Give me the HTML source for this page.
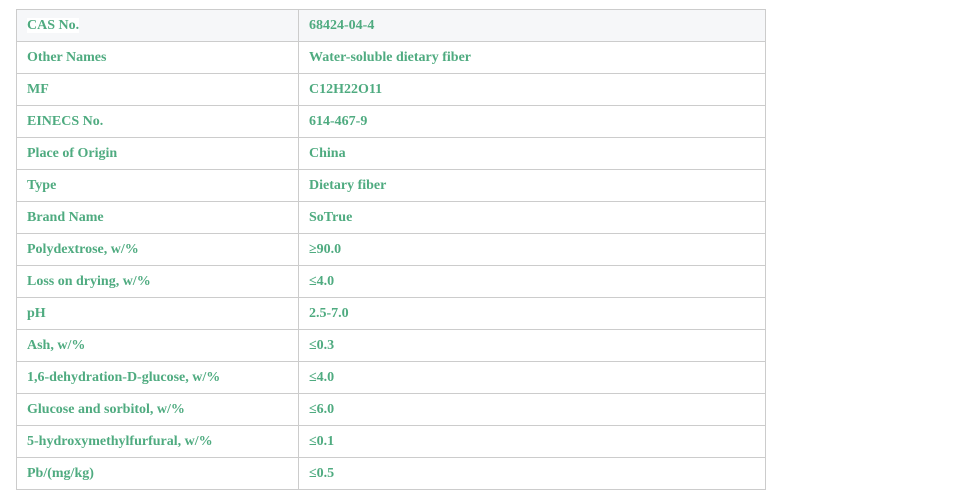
<!DOCTYPE html>
<html><head><style>
body{margin:0;background:#fff;}
table{position:absolute;left:16px;top:9px;border-collapse:collapse;width:750px;font-family:"Liberation Serif",serif;font-weight:bold;font-size:14px;color:#4fab80;}
td{border:1px solid #cccccc;height:32px;padding:0 0 0 10px;box-sizing:border-box;}
td:first-child{width:282px;}
tr:first-child td{background:#f6f7f9;}
tr:first-child td span{background:#fff;}
</style></head><body>
<table>
<tr><td><span>CAS No.</span></td><td>68424-04-4</td></tr>
<tr><td>Other Names</td><td>Water-soluble dietary fiber</td></tr>
<tr><td>MF</td><td>C12H22O11</td></tr>
<tr><td>EINECS No.</td><td>614-467-9</td></tr>
<tr><td>Place of Origin</td><td>China</td></tr>
<tr><td>Type</td><td>Dietary fiber</td></tr>
<tr><td>Brand Name</td><td>SoTrue</td></tr>
<tr><td>Polydextrose, w/%</td><td>≥90.0</td></tr>
<tr><td>Loss on drying, w/%</td><td>≤4.0</td></tr>
<tr><td>pH</td><td>2.5-7.0</td></tr>
<tr><td>Ash, w/%</td><td>≤0.3</td></tr>
<tr><td>1,6-dehydration-D-glucose, w/%</td><td>≤4.0</td></tr>
<tr><td>Glucose and sorbitol, w/%</td><td>≤6.0</td></tr>
<tr><td>5-hydroxymethylfurfural, w/%</td><td>≤0.1</td></tr>
<tr><td>Pb/(mg/kg)</td><td>≤0.5</td></tr>
</table>
</body></html>
